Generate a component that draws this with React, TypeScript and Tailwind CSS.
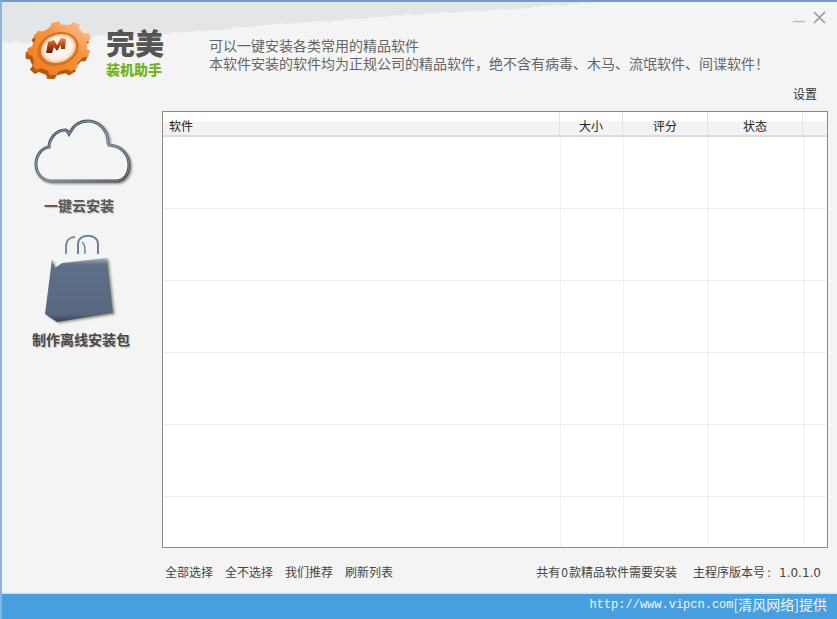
import React from "react";

const cjk = { fontFamily: '"Noto Sans CJK SC", sans-serif' };

function gearPath(cx: number, cy: number, rx: number, ry: number, rot: number) {
  const n = 9;
  const pts: string[] = [];
  const r = (rot * Math.PI) / 180;
  const push = (ang: number, k: number) => {
    const x = Math.cos(ang) * rx * k;
    const y = Math.sin(ang) * ry * k;
    pts.push(`${(cx + x * Math.cos(r) - y * Math.sin(r)).toFixed(1)} ${(cy + x * Math.sin(r) + y * Math.cos(r)).toFixed(1)}`);
  };
  const step = (Math.PI * 2) / n;
  for (let i = 0; i < n; i++) {
    const a = i * step;
    push(a - step * 0.28, 0.87);
    push(a - step * 0.17, 1);
    push(a + step * 0.17, 1);
    push(a + step * 0.28, 0.87);
  }
  return "M" + pts.join(" L") + " Z";
}

function Gear() {
  return (
    <svg width="70" height="62" viewBox="0 0 70 62" className="block">
      <defs>
        <linearGradient id="g1" x1="0.9" y1="0" x2="0.1" y2="1">
          <stop offset="0" stopColor="#fcc29a" />
          <stop offset="0.4" stopColor="#f5923f" />
          <stop offset="1" stopColor="#ef7d1c" />
        </linearGradient>
        <radialGradient id="g2" cx="0.5" cy="0.5" r="0.55">
          <stop offset="0" stopColor="#ffffff" />
          <stop offset="0.72" stopColor="#fbeee2" />
          <stop offset="1" stopColor="#e89a5c" />
        </radialGradient>
        <linearGradient id="g3" x1="0" y1="0" x2="0" y2="1">
          <stop offset="0" stopColor="#f28a3c" />
          <stop offset="0.55" stopColor="#b23d10" />
          <stop offset="1" stopColor="#5d1f0a" />
        </linearGradient>
      </defs>
      <path d={gearPath(33.5, 32, 33, 26, -22)} fill="#b65a0a" />
      <path d={gearPath(35.5, 28, 33, 26, -22)} fill="url(#g1)" />
      <ellipse cx="34" cy="29" rx="21" ry="16.5" transform="rotate(-20 34 29)" fill="#d9711c" />
      <ellipse cx="34.5" cy="28.5" rx="18" ry="14" transform="rotate(-20 34.5 28.5)" fill="url(#g2)" />
      <path d="M22 33 L24 22 L30 20 L33 25 L37 18 L42 19 L41 29 L37 29 L37 25 L33 31 L30 27 L28 33 Z" fill="url(#g3)" />
    </svg>
  );
}

function Cloud() {
  const d =
    "M18 62 C8 62 2 54 2 45 C2 36 8 29 15 28 C15 20 22 11 31 11 C33 11 34 13 35 15 C39 7 46 2 54 2 C65 2 74 11 74 24 L75 26 C87 27 95 35 95 46 C95 55 90 62 82 62 Z";
  return (
    <svg width="100" height="70" viewBox="0 0 100 70" className="block">
      <defs>
        <linearGradient id="c1" x1="0" y1="0" x2="1" y2="1">
          <stop offset="0" stopColor="#2f3c4c" />
          <stop offset="0.55" stopColor="#66798e" />
          <stop offset="1" stopColor="#333f50" />
        </linearGradient>
        <filter id="c2" x="-10%" y="-10%" width="120%" height="120%">
          <feGaussianBlur stdDeviation="0.8" />
        </filter>
      </defs>
      <path d={d} fill="none" stroke="#8f8f80" strokeWidth="3" transform="translate(1.5 1.5)" filter="url(#c2)" />
      <path d={d} fill="#f4f4f4" stroke="url(#c1)" strokeWidth="3" />
      <path d={d} fill="none" stroke="#cfd6dd" strokeWidth="0.5" />
    </svg>
  );
}

function Bag() {
  const body = "M8 25 L11 34 L18 29 L63 24 L69 79 L13 88 L1 80 Z";
  return (
    <svg width="76" height="92" viewBox="0 0 76 92" className="block">
      <defs>
        <linearGradient id="b1" x1="0" y1="0" x2="0" y2="1">
          <stop offset="0" stopColor="#aab4c0" />
          <stop offset="0.1" stopColor="#5f7089" />
          <stop offset="0.88" stopColor="#56677f" />
          <stop offset="1" stopColor="#33425a" />
        </linearGradient>
        <filter id="b2" x="-10%" y="-10%" width="120%" height="120%">
          <feGaussianBlur stdDeviation="0.9" />
        </filter>
      </defs>
      <path d="M22 20 V13 C22 6 26 3 31 3" fill="none" stroke="#7d8b99" strokeWidth="2" />
      <path d="M34 20 V10 C34 -1 54 -1 54 10 V20" fill="none" stroke="#6d8298" strokeWidth="2" />
      <path d="M38 8 C41 10 41 14 41 20" fill="none" stroke="#5f7288" strokeWidth="1.3" />
      <path d={body} fill="#9d9d88" transform="translate(2 1.5)" filter="url(#b2)" />
      <path d={body} fill="url(#b1)" />
    </svg>
  );
}

function tornPath() {
  const anchors: [number, number][] = [
    [0, 40], [30, 40], [100, 34], [170, 31], [280, 22], [400, 13], [500, 8], [580, 1], [600, 0],
  ];
  const pts: string[] = ["M0 0"];
  let seed = 7;
  for (let i = 0; i < anchors.length - 1; i++) {
    const [x0, y0] = anchors[i];
    const [x1, y1] = anchors[i + 1];
    for (let x = x0; x < x1; x += 4) {
      seed = (seed * 73 + 41) % 101;
      const y = y0 + ((y1 - y0) * (x - x0)) / (x1 - x0) + (seed / 101 - 0.5) * 2.4;
      pts.push(`L${x} ${Math.max(0, y).toFixed(1)}`);
    }
  }
  pts.push("L600 0 Z");
  return pts.join(" ");
}

const headCols = ["w-[397px]", "w-[63px]", "w-[85px]", "w-[95px]", "flex-1"];
const bodyCols = ["w-[398px]", "w-[63px]", "w-[85px]", "w-[95px]", "flex-1"];

export default function App() {
  return (
    <div
      className="relative flex h-[619px] w-[837px] flex-col overflow-hidden border-t-2 border-l-2 border-t-[#6d9fd2] border-l-[#84b6e2] bg-[#f4f4f4] text-[#555]"
      style={cjk}
    >
      <svg className="absolute left-0 top-0" width="620" height="50" viewBox="0 0 620 50">
        <path d={tornPath()} fill="#e4e5e7" />
      </svg>

      <header className="relative flex h-[109px] shrink-0">
        <div className="ml-[22px] mt-[18px]">
          <Gear />
        </div>
        <div className="ml-[12px] mt-[26px] flex flex-col">
          <div className="text-[29px] font-black leading-[29px] text-[#555]">完美</div>
          <div className="mt-[3px] text-[14px] font-black leading-[18px] text-[#71b51f]">装机助手</div>
        </div>
        <div className="ml-[45px] mt-[34px] text-[14px] leading-[18px] text-[#666]">
          <div>可以一键安装各类常用的精品软件</div>
          <div>本软件安装的软件均为正规公司的精品软件，绝不含有病毒、木马、流氓软件、间谍软件！</div>
        </div>
        <div className="absolute right-[11px] top-[9px] flex gap-[7px]">
          <svg width="13" height="13" viewBox="0 0 13 13">
            <path d="M0 10.5H12" stroke="#bbb" strokeWidth="1.4" />
          </svg>
          <svg width="13" height="13" viewBox="0 0 13 13">
            <path d="M1 1L12 12M12 1L1 12" stroke="#999" strokeWidth="1.6" />
          </svg>
        </div>
        <div className="absolute right-[20px] top-[83px] text-[12px] leading-[18px] text-[#333]">设置</div>
      </header>

      <div className="flex min-h-0 flex-1">
        <aside className="flex w-[160px] shrink-0 flex-col items-center">
          <div className="mr-[-4px] mt-[8px]">
            <Cloud />
          </div>
          <div className="mr-[6px] mt-[6px] text-[14px] font-bold leading-[20px] text-[#555] [text-shadow:1px_1px_1px_#bbb]">
            一键云安装
          </div>
          <div className="mt-[19px]">
            <Bag />
          </div>
          <div className="mr-[2px] mt-[3px] text-[14px] font-bold leading-[20px] text-[#4a4a4a] [text-shadow:1px_1px_1px_#bbb]">
            制作离线安装包
          </div>
        </aside>

        <div className="flex min-w-0 flex-1 flex-col pr-[9px]">
          <div className="flex h-[438px] flex-col overflow-hidden border border-[#8a8a8a] bg-white">
            <div className="flex h-[25px] shrink-0 border-b-2 border-[#dcdcdc] bg-[linear-gradient(to_bottom,#fff_0,#fff_9px,#f3f3f3_10px,#f3f3f3_100%)] text-[12px] leading-[24px] text-[#222]">
              {["软件", "大小", "评分", "状态", ""].map((t, i) => (
                <div
                  key={i}
                  className={`${headCols[i]} pt-[2px] ${i === 0 ? "pl-[6px]" : "text-center"} ${i < 4 ? "border-r border-[#e3e3e3]" : ""}`}
                >
                  {t}
                </div>
              ))}
            </div>
            <div className="flex min-h-0 flex-1 flex-col">
              {[0, 1, 2, 3, 4, 5].map((r) => (
                <div key={r} className="flex h-[72px] shrink-0 border-b border-[#eeeeee]">
                  {bodyCols.map((w, i) => (
                    <div key={i} className={`${w} ${i < 4 ? "border-r border-[#f0f0f0]" : ""}`} />
                  ))}
                </div>
              ))}
            </div>
          </div>
          <div className="flex h-[46px] shrink-0 items-center justify-between pl-[3px] pr-[7px] pt-[2px] text-[12px] text-[#444]">
            <div className="flex gap-[12px]">
              <span>全部选择</span>
              <span>全不选择</span>
              <span>我们推荐</span>
              <span>刷新列表</span>
            </div>
            <div className="flex gap-[16px]">
              <span>
                共有<span className="mx-[1px]">0</span>款精品软件需要安装
              </span>
              <span>
                主程序版本号
                <span className="inline-block w-[14px] pl-[2px]" style={{ fontFamily: '"DejaVu Sans", sans-serif' }}>:</span>
                <span style={{ fontFamily: '"DejaVu Sans", sans-serif' }}>1.0.1.0</span>
              </span>
            </div>
          </div>
        </div>
      </div>

      <footer
        className="ml-[-2px] flex h-[25px] shrink-0 items-center justify-end bg-[#479fe0] pb-[4px] pr-[10px] text-[12px] text-[#eef6fc] shadow-[0_-1px_2px_rgba(0,0,0,0.12)]"
        style={{ fontFamily: '"Liberation Mono", monospace' }}
      >
        <span>http://www.vipcn.com</span>
        <span className="text-[14px]" style={cjk}>[清风网络]提供</span>
      </footer>
    </div>
  );
}
